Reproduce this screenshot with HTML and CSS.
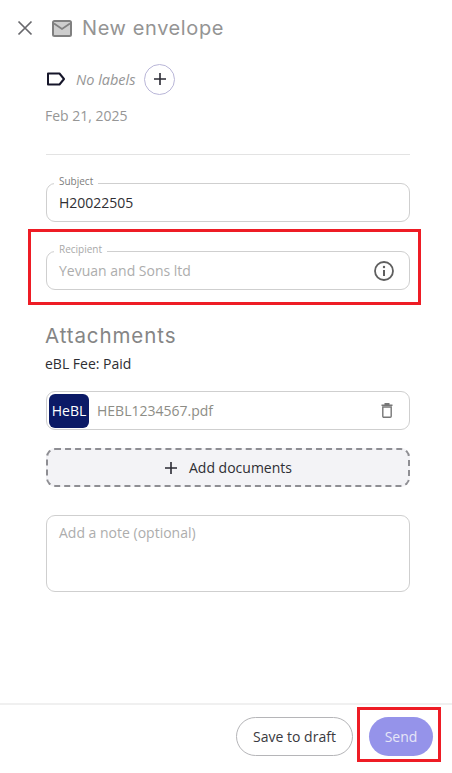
FILE: index.html
```html
<!DOCTYPE html>
<html lang="en">
<head>
<meta charset="utf-8">
<title>New envelope</title>
<link rel="stylesheet" href="styles.css">
</head>
<body>
<div class="page">
  <header class="header">
    <svg class="close" width="16" height="16" viewBox="0 0 16 16"><path d="M1.500 1.500l13 13M14.500 1.500l-13 13" stroke="#68686c" stroke-width="1.700" fill="none"/></svg>
    <svg class="mail" width="20" height="17" viewBox="0 0 20 17"><rect x="1" y="1" width="18" height="15" rx="1.5" fill="#cdcdcd" stroke="#808080" stroke-width="2"/><path d="M2 3.500l8 5.500 8-5.500" fill="none" stroke="#808080" stroke-width="1.800"/></svg>
    <h1 class="title">New envelope</h1>
  </header>
  <main class="content">
    <div class="labels">
      <svg class="tag" width="20" height="14" viewBox="0 0 20 14"><path d="M2 1.500h11.500L18 7l-4.500 5.500H2z" fill="none" stroke="#16162a" stroke-width="2" stroke-linejoin="round"/></svg>
      <span class="no-labels">No labels</span>
      <span class="add-label"><svg width="14" height="14" viewBox="0 0 14 14"><path d="M7 1v12M1 7h12" stroke="#2a2a33" stroke-width="1.600"/></svg></span>
    </div>
    <div class="date">Feb 21, 2025</div>
    <hr class="divider">
    <div class="field subject">
      <span class="legend">Subject</span>
      <span class="value">H20022505</span>
    </div>
    <div class="field recipient">
      <span class="legend legend-muted">Recipient</span>
      <span class="value value-muted">Yevuan and Sons ltd</span>
      <svg class="info" width="22" height="22" viewBox="0 0 22 22"><circle cx="11" cy="11" r="9" fill="none" stroke="#5f5f5f" stroke-width="1.800"/><circle cx="11" cy="7" r="1.200" fill="#5f5f5f"/><path d="M11 10v6" stroke="#5f5f5f" stroke-width="2"/></svg>
      <span class="annotation annotation-recipient"></span>
    </div>
    <h2 class="section-title">Attachments</h2>
    <div class="fee">eBL Fee: Paid</div>
    <div class="attachment">
      <span class="thumb">HeBL</span>
      <span class="file-name">HEBL1234567.pdf</span>
      <svg class="trash" width="12" height="15" viewBox="0 0 12 15"><path d="M1.800 4h8.400v9.200a1 1 0 0 1-1 1H2.800a1 1 0 0 1-1-1z" fill="none" stroke="#777" stroke-width="1.400"/><path d="M0.500 2.200h11M3.500 0.800h5" stroke="#777" stroke-width="1.400"/></svg>
    </div>
    <div class="add-docs">
      <svg width="14" height="14" viewBox="0 0 14 14"><path d="M7 1v12M1 7h12" stroke="#2a2a33" stroke-width="1.600"/></svg>
      <span>Add documents</span>
    </div>
    <div class="note">Add a note (optional)</div>
  </main>
  <footer class="footer">
    <button class="btn btn-draft">Save to draft</button>
    <div class="send-wrap">
      <button class="btn btn-send">Send</button>
      <span class="annotation annotation-send"></span>
    </div>
  </footer>
</div>
</body>
</html>
```

FILE: styles.css
```css
* { box-sizing: border-box; }
html, body { margin: 0; padding: 0; background: #fff; }
body { font-family: "Open Sans", "Liberation Sans", sans-serif; color: #2b2b30; overflow: hidden; }
.page { width: 452px; height: 773px; display: flex; flex-direction: column; }

.header { height: 56px; display: flex; align-items: center; padding-left: 17px; flex-shrink: 0; }
.close { margin-right: 19px; }
.mail { margin-right: 10px; }
.title { margin: 0; font-family: Inter, "Noto Sans", sans-serif; font-size: 20px; font-weight: 400; color: #949494; letter-spacing: 0.6px; }

.content { flex: 1; padding: 0 42px 0 46px; display: flex; flex-direction: column; }
.labels { display: flex; align-items: center; height: 30px; margin-top: 8px; }
.tag { margin-right: 10px; }
.no-labels { font-size: 14.500px; font-style: italic; color: #969696; width: 68px; }
.add-label { width: 31px; height: 31px; border: 1px solid #b9b6d8; border-radius: 50%; display: flex; align-items: center; justify-content: center; }
.date { font-size: 14px; color: #969696; margin-top: 13px; line-height: 18px; margin-left: -1px; }
.divider { width: 100%; height: 1px; border: 0; background: #e3e3e3; margin: 29px 0 0; }

.field { position: relative; height: 39px; border: 1px solid #cfcfcf; border-radius: 9px; display: flex; align-items: center; padding: 0 14px 0 12px; justify-content: space-between; }
.subject { margin-top: 28px; }
.recipient { margin-top: 29px; }
.legend { position: absolute; left: 7px; top: -10px; padding: 0 5px; background: #fff; font-size: 10px; line-height: 14px; color: #7d7d7d; }
.legend-muted { color: #a9a9a9; }
.value { font-size: 14px; color: #2f2f33; }
.value-muted { color: #adadad; }

.annotation { position: absolute; border: 3px solid #ee1c25; pointer-events: none; }
.annotation-recipient { left: -19px; right: -12px; top: -23px; bottom: -16px; }
.annotation-send { left: -12px; right: -8px; top: -10px; bottom: -6px; }

.section-title { margin: 33px 0 0 -1px; font-family: Inter, "Noto Sans", sans-serif; font-size: 20.500px; line-height: 26px; font-weight: 400; color: #858585; letter-spacing: 0.9px; }
.fee { font-size: 14px; line-height: 18px; margin: 6px 0 0 -1px; color: #2e2e33; }

.attachment { height: 39px; border: 1px solid #cfcfcf; border-radius: 9px; margin-top: 18px; display: flex; align-items: center; padding: 0 16px 0 2px; }
.thumb { width: 40px; height: 34px; background: #0b1a66; color: #fff; border-radius: 6px; font-size: 14px; display: flex; align-items: center; justify-content: center; margin-right: 8px; }
.file-name { flex: 1; font-size: 14px; color: #8d8d86; }

.add-docs { height: 39px; margin-top: 18px; border: 2px dashed #8e8e93; border-radius: 9px; background: #f3f3f6; display: flex; align-items: center; justify-content: center; gap: 11px; font-size: 14px; color: #2e2e33; }

.note { height: 77px; margin-top: 28px; border: 1px solid #cfcfcf; border-radius: 9px; padding: 7px 12px; font-size: 14px; line-height: 20px; color: #adadad; }

.footer { height: 70px; border-top: 2px solid #f0f0f0; display: flex; align-items: flex-start; justify-content: flex-end; padding: 12px 19px 0 0; gap: 16px; flex-shrink: 0; }
.btn { height: 39px; border-radius: 20px; font-family: inherit; font-size: 14px; padding: 0; }
.btn-draft { width: 117px; background: #fff; border: 1px solid #b5b5b8; color: #3a3a40; }
.send-wrap { position: relative; display: flex; }
.btn-send { width: 64px; border: 0; background: #9593ea; color: #e6e6f7; }
```
